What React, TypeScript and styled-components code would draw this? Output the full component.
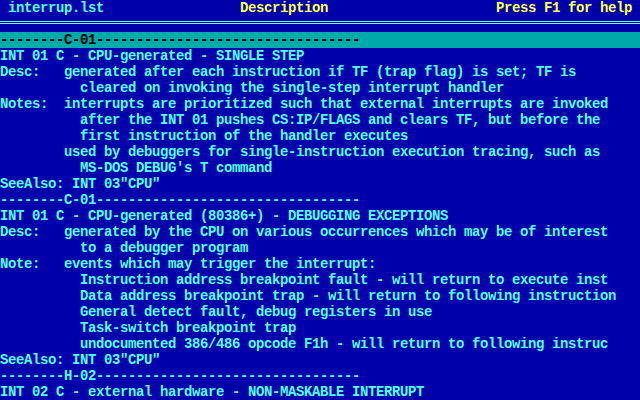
import styled, { createGlobalStyle } from "styled-components";

const GlobalStyle = createGlobalStyle`
  html, body {
    margin: 0;
    padding: 0;
    background: #0000aa;
  }
`;

// 80x25 text screen: every cell is 8px wide, 16px tall
const Screen = styled.div`
  width: 640px;
  height: 400px;
  overflow: hidden;
  background: #0000aa;
  font-family: "Liberation Mono", "DejaVu Sans Mono", monospace;
  font-size: 14px;
  letter-spacing: -0.4px;
  font-weight: bold;
  display: flex;
  flex-direction: column;
`;

const TitleBar = styled.div`
  height: 16px;
  line-height: 17px;
  display: grid;
  grid-template-columns: 8px 232px 256px 1fr;
  white-space: pre;
`;

const TitleText = styled.span<{ $tone: "cyan" | "yellow" }>`
  color: ${(p) => (p.$tone === "cyan" ? "#55ffff" : "#ffff55")};
`;

const DoubleRule = styled.div`
  height: 16px;
  box-sizing: border-box;
  padding-top: 5px;

  &::before {
    content: "";
    display: block;
    height: 1px;
    border-bottom: 1px solid #55ffff;
    border-top: 1px solid #55ffff;
  }
`;

const Line = styled.div<{ $selected?: boolean }>`
  height: 16px;
  line-height: 17px;
  white-space: pre;
  color: ${(p) => (p.$selected ? "#000000" : "#55ffff")};
  background: ${(p) => (p.$selected ? "#00aaaa" : "transparent")};
`;

const lines = [
  "--------C-01---------------------------------",
  "INT 01 C - CPU-generated - SINGLE STEP",
  "Desc:   generated after each instruction if TF (trap flag) is set; TF is",
  "          cleared on invoking the single-step interrupt handler",
  "Notes:  interrupts are prioritized such that external interrupts are invoked",
  "          after the INT 01 pushes CS:IP/FLAGS and clears TF, but before the",
  "          first instruction of the handler executes",
  "        used by debuggers for single-instruction execution tracing, such as",
  "          MS-DOS DEBUG's T command",
  'SeeAlso: INT 03"CPU"',
  "--------C-01---------------------------------",
  "INT 01 C - CPU-generated (80386+) - DEBUGGING EXCEPTIONS",
  "Desc:   generated by the CPU on various occurrences which may be of interest",
  "          to a debugger program",
  "Note:   events which may trigger the interrupt:",
  "          Instruction address breakpoint fault - will return to execute inst",
  "          Data address breakpoint trap - will return to following instruction",
  "          General detect fault, debug registers in use",
  "          Task-switch breakpoint trap",
  "          undocumented 386/486 opcode F1h - will return to following instruc",
  'SeeAlso: INT 03"CPU"',
  "--------H-02---------------------------------",
  "INT 02 C - external hardware - NON-MASKABLE INTERRUPT",
];

export default function App() {
  return (
    <Screen>
      <GlobalStyle />
      <TitleBar>
        <span />
        <TitleText $tone="cyan">interrup.lst</TitleText>
        <TitleText $tone="yellow">Description</TitleText>
        <TitleText $tone="yellow">Press F1 for help</TitleText>
      </TitleBar>
      <DoubleRule />
      {lines.map((text, i) => (
        <Line key={i} $selected={i === 0}>
          {text}
        </Line>
      ))}
    </Screen>
  );
}
